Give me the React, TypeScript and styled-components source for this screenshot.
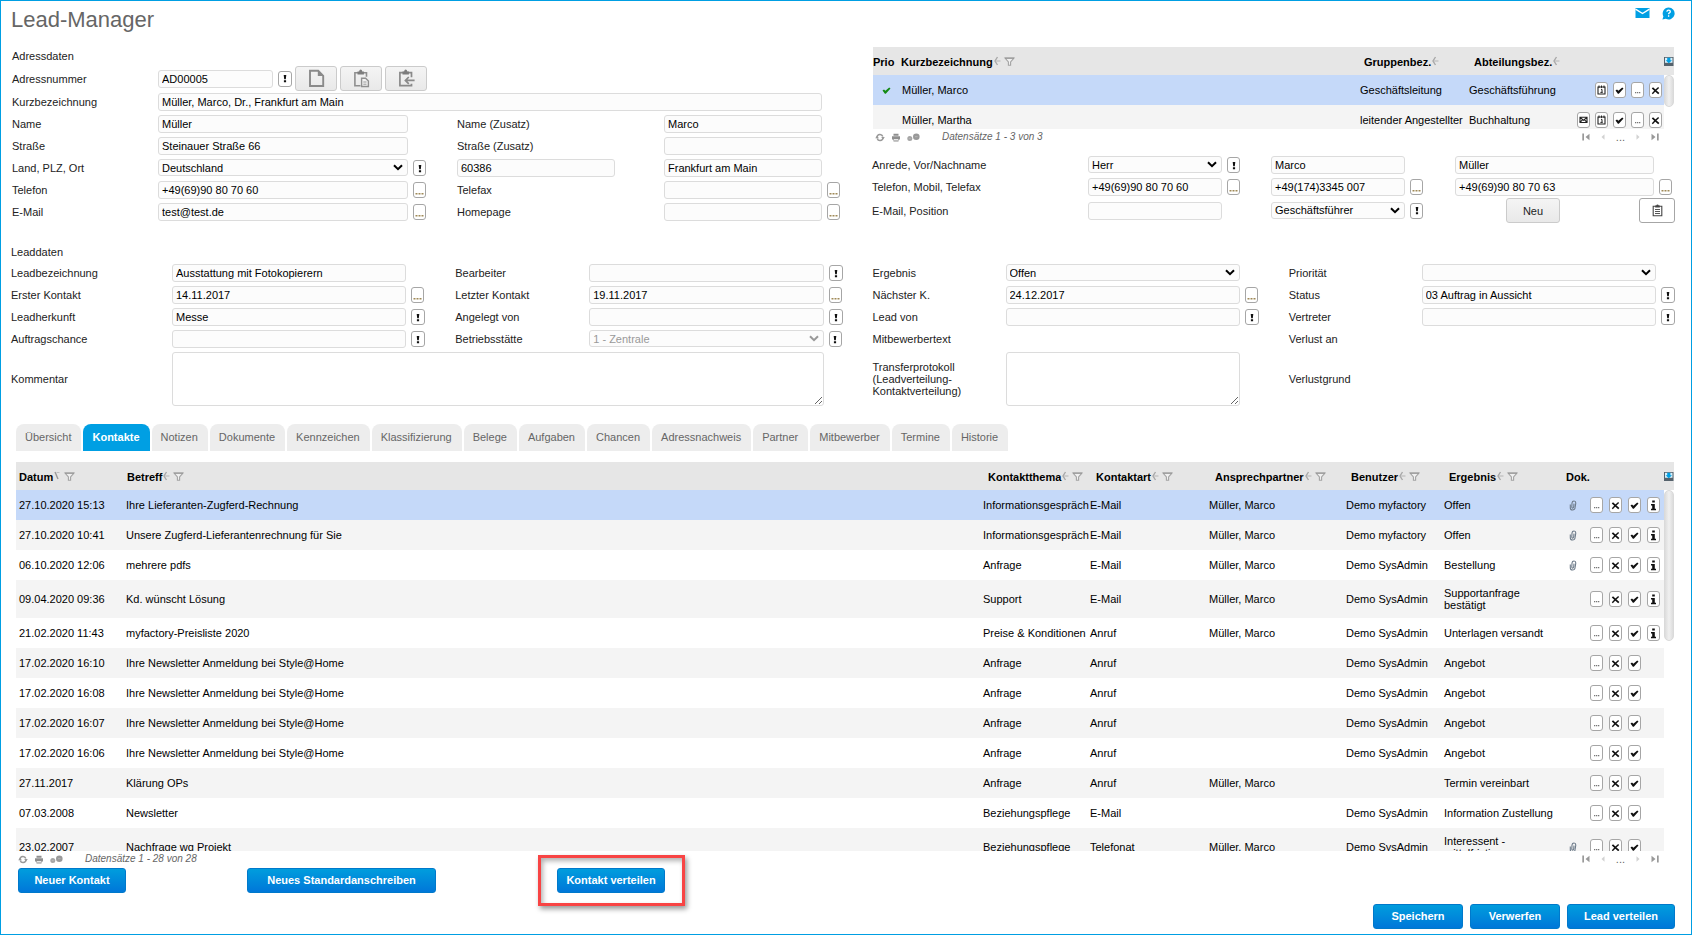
import React, { useId, useState } from 'react';
import styled, { createGlobalStyle, css } from 'styled-components';

const GlobalStyle = createGlobalStyle`
  *, *::before, *::after { box-sizing: border-box; }
  body {
    margin: 0;
    background: #fff;
    color: #222;
    font-family: "Liberation Sans", Arial, sans-serif;
    font-size: 11px;
    line-height: 12px;
  }
  button, input, select, textarea { font: inherit; margin: 0; }
`;

/* ---------- page frame ---------- */

const Page = styled.main`
  min-height: 100vh;
  border: 1px solid #009fe3;
  padding: 0 16px 5px 10px;
  display: flex;
  flex-direction: column;
`;

const PageHeader = styled.header`
  height: 45px;
  display: flex;
  justify-content: space-between;
  align-items: flex-start;
`;

const Title = styled.h1`
  margin: 7px 0 0;
  font-size: 22px;
  line-height: 24px;
  font-weight: 400;
  color: #666;
`;

const HeaderLinks = styled.nav`
  display: flex;
  gap: 12px;
  padding-top: 5px;
  a { display: block; height: 14px; }
  svg { display: block; }
`;

const TopColumns = styled.div`
  display: grid;
  grid-template-columns: 861fr 803fr;
`;

/* ---------- form parts ---------- */

const AddressGrid = styled.section`
  display: grid;
  grid-template-columns: 146px 250fr 49px 207fr 158fr 50px;
  grid-template-rows: 20px 25px repeat(6, 22px);
  align-items: center;
  padding-left: 1px;
  align-content: start;
`;

const PersonGrid = styled.section`
  display: grid;
  grid-template-columns: 216px 134fr 49px 134fr 50px 199fr 21px;
  grid-template-rows: 22px 22px 25px;
  align-items: center;
`;

const LeadGrid = styled.section`
  margin-top: 19px;
  display: grid;
  grid-template-columns:
    161px minmax(0, 1fr) 49px 134px minmax(0, 1fr) 49px
    133px minmax(0, 1fr) 49px 133px minmax(0, 1fr) 19px;
  grid-template-rows: 20px repeat(4, 22px) 58px;
  align-items: center;
`;

const SectionTitle = styled.h2`
  grid-column: 1 / -1;
  margin: 0;
  font-size: 11px;
  font-weight: 400;
`;

const Label = styled.label`
  white-space: pre-line;
`;

const PlainText = styled.span``;

const fieldLook = css`
  width: 100%;
  min-width: 0;
  border: 1px solid #dcdcdc;
  border-radius: 3px;
  background: #fcfcfc;
  color: #000;
  outline: none;
`;

const Input = styled.input<{ $span?: number }>`
  ${fieldLook}
  height: 18px;
  padding: 0 3px;
  ${(p) => p.$span && `grid-column: span ${p.$span};`}
`;

const SelectBox = styled.span`
  position: relative;
  display: block;
  height: 17px;
  margin-bottom: 1px;
  svg {
    position: absolute;
    right: 5px;
    top: 5px;
    pointer-events: none;
  }
`;

const NativeSelect = styled.select`
  ${fieldLook}
  display: block;
  height: 17px;
  padding: 0 16px 0 3px;
  appearance: none;
  &:disabled { color: #999; opacity: 1; }
`;

const TextArea = styled.textarea<{ $span?: number }>`
  ${fieldLook}
  display: block;
  height: 54px;
  background: #fff;
  ${(p) => p.$span && `grid-column: span ${p.$span};`}
`;

const Aside = styled.span<{ $span?: number }>`
  display: flex;
  align-items: center;
  padding-left: 5px;
  ${(p) => p.$span && `grid-column: span ${p.$span};`}
`;

const NumberRow = styled.span`
  grid-column: 2 / -1;
  display: flex;
  align-items: center;
  gap: 3px;
`;

const NumberInput = styled(Input)`
  width: 115px;
  margin-right: 2px;
`;

const ZipCell = styled.span`
  padding-right: 49px;
  display: flex;
`;

const MiniButton = styled.button<{ $wide?: boolean }>`
  flex: none;
  width: ${(p) => (p.$wide ? 14 : 13)}px;
  height: 16px;
  padding: 0;
  border: 1px solid #a6a6a6;
  border-radius: 3px;
  background: #fff;
  display: inline-flex;
  align-items: center;
  justify-content: center;
  color: #111;
  svg { display: block; }
`;

const ToolButton = styled.button<{ $width: number; $plain?: boolean }>`
  width: ${(p) => p.$width}px;
  height: 25px;
  padding: 0;
  border: 1px solid ${(p) => (p.$plain ? '#a6a6a6' : '#cbcbcb')};
  border-radius: 3px;
  background: ${(p) => (p.$plain ? '#fff' : 'linear-gradient(#f4f4f4, #e9e9e9)')};
  color: #222;
  display: inline-flex;
  align-items: center;
  justify-content: center;
`;

const PersonActions = styled.span`
  grid-column: span 2;
  display: flex;
  justify-content: space-between;
  padding-left: 51px;
`;

/* ---------- tabs ---------- */

const TabBar = styled.div`
  margin: 16px 0 11px 5px;
  display: flex;
  gap: 2px;
`;

const Tab = styled.button<{ $active: boolean }>`
  height: 27px;
  padding: 0 10px 2px 9px;
  border: 0;
  border-radius: 8px 8px 0 0;
  background: ${(p) => (p.$active ? '#009fe3' : '#ededed')};
  color: ${(p) => (p.$active ? '#fff' : '#666')};
  font-weight: ${(p) => (p.$active ? 700 : 400)};
`;

/* ---------- lists ---------- */

const ListFrame = styled.div<{ $height: number }>`
  position: relative;
  height: ${(p) => p.$height}px;
`;

const ListScroll = styled.div`
  height: 100%;
  overflow: hidden auto;
  scrollbar-width: none;
`;

const ScrollThumb = styled.span<{ $height: number }>`
  position: absolute;
  top: 28px;
  right: 0;
  width: 10px;
  height: ${(p) => p.$height}px;
  border: 1px solid #dadada;
  border-radius: 5px;
  background: linear-gradient(90deg, #dcdcdc, #f0f0f0 50%, #dcdcdc);
`;

const Table = styled.table`
  width: 100%;
  table-layout: fixed;
  border-collapse: collapse;
  color: #000;
`;

const HeadCell = styled.th<{ $indent?: number }>`
  height: 28px;
  padding: 1px 0 0 ${(p) => p.$indent ?? 0}px;
  background: #e6e6e6;
  text-align: left;
  white-space: nowrap;
`;

const HeadInner = styled.span`
  display: flex;
  align-items: center;
  svg { flex: none; }
`;

const PickerCell = styled(HeadCell)`
  padding: 0;
  svg { display: block; }
`;

const Row = styled.tr<{ $selected?: boolean }>`
  height: 30px;
  td { background: ${(p) => (p.$selected ? '#c5d9f9' : '#fff')}; }
  &:nth-child(even) td { background: #f4f4f4; }
  td:last-child { background: #fff; }
`;

const Cell = styled.td<{ $wrap?: boolean }>`
  padding: 7px ${(p) => (p.$wrap ? 7 : 0)}px 7px 3px;
  white-space: ${(p) => (p.$wrap ? 'normal' : 'nowrap')};
`;

const IconCell = styled.td`
  padding: 0;
  text-align: center;
  svg { display: block; margin: 0 auto; }
`;

const ActionCell = styled.td`
  padding: 0;
`;

const Actions = styled.span<{ $gap: number; $end?: boolean }>`
  display: flex;
  gap: ${(p) => p.$gap}px;
  justify-content: ${(p) => (p.$end ? 'flex-end' : 'flex-start')};
  padding: 0 2px 0 7px;
`;

const ListFooter = styled.div<{ $height: number }>`
  height: ${(p) => p.$height}px;
  padding: 0 15px 0 2px;
  display: flex;
  justify-content: space-between;
  align-items: flex-start;
  color: #666;
`;

const FooterGroup = styled.span`
  display: flex;
  align-items: center;
  gap: 6px;
  height: 16px;
`;

const RecordCount = styled.em`
  margin-left: 16px;
  font-size: 10px;
`;

const Pager = styled(FooterGroup)`
  gap: 11px;
`;

const PagerButton = styled.button`
  padding: 0;
  border: 0;
  background: none;
  display: block;
  svg { display: block; }
`;

const PersonList = styled.div`
  margin: 1px 1px 0;
`;

const ContactList = styled.div`
  margin: 0 1px 0 5px;
`;

/* ---------- action buttons ---------- */

const ActionBar = styled.div`
  padding-left: 7px;
  display: flex;
`;

const ActionSlot = styled.span<{ $after?: number }>`
  position: relative;
  margin-right: ${(p) => p.$after ?? 0}px;
`;

const PrimaryButton = styled.button<{ $width: number }>`
  width: ${(p) => p.$width}px;
  height: 25px;
  padding: 0 0 2px;
  border: 1px solid #0079cb;
  border-radius: 3px;
  background: linear-gradient(#009ddd, #0077d9);
  color: #fff;
  font-weight: 700;
`;

const Highlight = styled.span`
  position: absolute;
  inset: -13px -20px -13px -19px;
  border: 3px solid #f84444;
  box-shadow: 2px 3px 5px rgba(0, 0, 0, 0.4), inset 2px 3px 5px rgba(0, 0, 0, 0.3);
  pointer-events: none;
`;

const BottomBar = styled.footer`
  margin-top: 11px;
  display: flex;
  justify-content: flex-end;
  gap: 7px;
`;

/* ---------- icons ---------- */

const Chevron = ({ color = '#000' }: { color?: string }) => (
  <svg width="10" height="7" viewBox="0 0 10 7" aria-hidden="true">
    <path d="M1 1.2 L5 5.2 L9 1.2" fill="none" stroke={color} strokeWidth="2" />
  </svg>
);

const Bang = () => (
  <svg width="4" height="9" viewBox="0 0 4 9" aria-hidden="true">
    <path d="M0.7 1h2.6l-0.5 4.2h-1.6z M0.9 6.2h2.2v2h-2.2z" fill="#111" />
  </svg>
);

const Dots = () => (
  <svg width="9" height="12" viewBox="0 0 9 12" aria-hidden="true">
    <path d="M0.5 9h2v1.5h-2z M3.5 9h2v1.5h-2z M6.5 9h2v1.5h-2z" fill="#a08a58" />
  </svg>
);

const SmallDots = () => (
  <svg width="7" height="10" viewBox="0 0 7 10" aria-hidden="true">
    <path d="M1 7h1.3v1.2h-1.3z M3 7h1.3v1.2h-1.3z M5 7h1.3v1.2h-1.3z" fill="#777" />
  </svg>
);

const Cross = () => (
  <svg width="9" height="9" viewBox="0 0 9 9" aria-hidden="true">
    <path d="M1.4 1.8 L4.4 4.6 L7.8 7.6" stroke="#111" strokeWidth="1.8" fill="none" />
    <path d="M7.6 1.4 L4.4 4.6 L1.3 7.8" stroke="#111" strokeWidth="1.4" fill="none" />
  </svg>
);

const Check = ({ color = '#111' }: { color?: string }) => (
  <svg width="9" height="9" viewBox="0 0 9 9" aria-hidden="true">
    <path d="M0.5 4.4 L2 3.4 L3.4 4.7 L7.2 1.4 L8.5 2.4 L3.8 7.8 L2.9 7.8 Z" fill={color} />
  </svg>
);

const Info = () => (
  <svg width="7" height="11" viewBox="0 0 7 11" aria-hidden="true">
    <path d="M2.2 0.5h2.6v2h-2.6z M1 4h3.8v4.7h1.2v1.5h-5v-1.5h1.2v-3.2h-1.2z" fill="#111" />
  </svg>
);

const Calendar = () => (
  <svg width="9" height="10" viewBox="0 0 9 10" aria-hidden="true">
    <path d="M1 2h7v7h-7z" fill="none" stroke="#222" strokeWidth="1.1" />
    <path d="M2 0.5v2.4 M4.5 0.5v2.4 M7 0.5v2.4" stroke="#222" strokeWidth="1" />
    <path d="M4 4.4h1v3 M3.4 7.4h2.3" stroke="#222" strokeWidth="1" fill="none" />
  </svg>
);

const Envelope = () => (
  <svg width="9" height="8" viewBox="0 0 9 8" aria-hidden="true">
    <path d="M1 1.2h7v5.3h-7z M1 1.4l3.5 2.8l3.5-2.8 M1 6.4l2.4-2.6 M8 6.4l-2.4-2.6" fill="none" stroke="#222" strokeWidth="1.1" />
  </svg>
);

const Paperclip = () => (
  <svg width="8" height="11" viewBox="0 0 8 11" aria-hidden="true">
    <path d="M1.3 4.5 L1.3 8 Q1.3 10 3.5 10 Q5.8 10 6 8 L6.8 3 Q6.8 1 5 1 Q3.2 1 3 3 L2.8 7 Q2.9 8.2 3.8 8.1 Q4.6 8 4.7 7 L5 3.6" fill="none" stroke="#6c7a89" strokeWidth="1.1" />
  </svg>
);

const SortIcon = () => (
  <svg width="8" height="11" viewBox="0 0 8 11" aria-hidden="true">
    <path d="M4.5 1 L2 5 L4.5 9" fill="none" stroke="#a8a8a8" strokeWidth="1.4" />
    <path d="M3 5h4.5" stroke="#c0c0c0" strokeWidth="1.3" />
  </svg>
);

const SortDownIcon = () => (
  <svg width="8" height="11" viewBox="0 0 8 11" aria-hidden="true">
    <path d="M2 1 L5 8" stroke="#999" strokeWidth="1.4" />
    <path d="M3.5 1.5h3" stroke="#c0c0c0" strokeWidth="1" />
  </svg>
);

const FilterIcon = () => (
  <svg width="14" height="10" viewBox="0 0 14 10" aria-hidden="true">
    <path d="M4 1h9L9.6 5v3.2H7.4V5z" fill="#f0f0f0" stroke="#a3a3a3" strokeWidth="1.1" />
    <path d="M4 1.2h9" stroke="#999" strokeWidth="1.2" />
  </svg>
);

const PickerIcon = () => (
  <svg width="10" height="11" viewBox="0 0 10 11" aria-hidden="true">
    <path d="M0 1h9.5v9h-9.5z" fill="#55626c" />
    <path d="M1 1.8h7.5v5h-7.5z" fill="#d9f0fb" />
    <path d="M3.2 1.8h3.2v2.4h1.6l-3.2 3l-3.2-3h1.6z" fill="#009fe3" />
  </svg>
);

const ReloadIcon = () => (
  <svg width="10" height="9" viewBox="0 0 10 9" aria-hidden="true">
    <path d="M2 4.2A3 3 0 0 1 7.8 3.6 M8 5A3 3 0 0 1 2.2 5.6" fill="none" stroke="#999" strokeWidth="1.5" />
    <path d="M0.2 5.2h3.8l-2-2.4z M6.2 4h3.6l-1.8 2.4z" fill="#999" />
  </svg>
);

const PrintIcon = () => (
  <svg width="10" height="9" viewBox="0 0 10 9" aria-hidden="true">
    <path d="M2.5 0.8h5v2h-5z M1 3.2h8v3.3h-8z M2.5 6.5h5v2h-5z" fill="#8e8e8e" />
    <path d="M3 6h4v1.5h-4z" fill="#e8e8e8" />
  </svg>
);

const CountIcon = () => (
  <svg width="13" height="9" viewBox="0 0 13 9" aria-hidden="true">
    <circle cx="2.8" cy="5.6" r="2.5" fill="#a5a5a5" />
    <circle cx="9.3" cy="3.7" r="3.3" fill="#999" />
    <path d="M1.8 5.6h2 M8 3.7h2.6" stroke="#bbb" strokeWidth="0.8" />
  </svg>
);

const EdgeIcon = ({ end }: { end?: boolean }) => (
  <svg width="8" height="8" viewBox="0 0 8 8" aria-hidden="true">
    {end ? (
      <path d="M0.5 0.8l4 3.2l-4 3.2z M6 0.5h1.7v7h-1.7z" fill="#999" />
    ) : (
      <path d="M7.5 0.8l-4 3.2l4 3.2z M0.3 0.5h1.7v7h-1.7z" fill="#999" />
    )}
  </svg>
);

const StepIcon = ({ next }: { next?: boolean }) => (
  <svg width="4" height="8" viewBox="0 0 4 8" aria-hidden="true">
    {next ? <path d="M0.5 1.2l3 2.8l-3 2.8z" fill="#d2d2d2" /> : <path d="M3.5 1.2l-3 2.8l3 2.8z" fill="#d2d2d2" />}
  </svg>
);

const MailIcon = () => (
  <svg width="15" height="14" viewBox="0 0 15 14" aria-hidden="true">
    <path d="M0.5 2h14v10h-14z" fill="#009fe3" />
    <path d="M0.5 3.2l7 4.3l7-4.3" fill="none" stroke="#fff" strokeWidth="1.4" />
  </svg>
);

const HelpIcon = () => (
  <svg width="13" height="14" viewBox="0 0 13 14" aria-hidden="true">
    <path d="M6.6 1.5a6 6 0 1 1 -2.8 11.3l-3.4 0.8l1-3.2A6 6 0 0 1 6.6 1.5z" fill="#009fe3" />
    <path d="M4.9 5.7q0.1-1.6 1.7-1.6q1.7 0 1.7 1.4q0 0.9-0.9 1.4q-0.8 0.4-0.8 1.4 M6.6 9.3v1.4" fill="none" stroke="#fff" strokeWidth="1.3" />
  </svg>
);

const PageIcon = () => (
  <svg width="17" height="19" viewBox="0 0 17 19" aria-hidden="true">
    <path d="M2 1.8h8.2l5 5v10.2h-13.2z" fill="none" stroke="#8a8a8a" strokeWidth="1.9" />
    <path d="M9.8 1.5v5.5h5.6z" fill="#8a8a8a" />
  </svg>
);

const PasteIcon = () => (
  <svg width="17" height="19" viewBox="0 0 17 19" aria-hidden="true">
    <path d="M7.5 16.7h-5.6v-13h11.6v4" fill="none" stroke="#8f8f8f" strokeWidth="1.6" />
    <path d="M4.5 2.6h1.6q0.3-2 1.6-2t1.6 2h1.6v3h-6.4z" fill="#7d7d7d" />
    <path d="M8.6 9.3h4l2.8 2.8v5.4h-6.8z" fill="#f2f2f2" stroke="#8f8f8f" strokeWidth="1.4" />
    <path d="M10.3 13h3.2 M10.3 15.2h3.2" stroke="#999" strokeWidth="1" />
  </svg>
);

const TakeOverIcon = () => (
  <svg width="17" height="19" viewBox="0 0 17 19" aria-hidden="true">
    <path d="M13.5 8.2v-4.5h-11.6v13h11.6v-2" fill="none" stroke="#8a8a8a" strokeWidth="1.7" />
    <path d="M4.5 2.6h1.6q0.3-2 1.6-2t1.6 2h1.6v3h-6.4z" fill="#7d7d7d" />
    <path d="M16.6 11.4h-8.6 M10.8 8l-3.4 3.4l3.4 3.4" fill="none" stroke="#8a8a8a" strokeWidth="1.7" />
  </svg>
);

const NoteIcon = () => (
  <svg width="11" height="13" viewBox="0 0 11 13" aria-hidden="true">
    <path d="M1.2 2.2h8.6v9.6h-8.6z" fill="none" stroke="#444" strokeWidth="1.1" />
    <path d="M3.2 1.4h1.1q0.2-1 1.2-1t1.2 1h1.1v2h-4.6z" fill="#444" />
    <path d="M3 5.5h5 M3 7.5h5 M3 9.5h5" stroke="#555" strokeWidth="1" />
  </svg>
);

/* ---------- building blocks ---------- */

type Extra = 'bang' | 'dots';

function ExtraButton({ kind, name, wide }: { kind: Extra; name: string; wide?: boolean }) {
  return (
    <MiniButton type="button" $wide={wide} aria-label={`${name}: Auswahl`}>
      {kind === 'bang' ? <Bang /> : <Dots />}
    </MiniButton>
  );
}

function Select({ id, name, value, disabled }: { id?: string; name: string; value: string; disabled?: boolean }) {
  return (
    <SelectBox>
      <NativeSelect id={id} aria-label={id ? undefined : name} disabled={disabled} defaultValue={value}>
        <option value={value}>{value}</option>
      </NativeSelect>
      <Chevron color={disabled ? '#999' : '#000'} />
    </SelectBox>
  );
}

interface FieldProps {
  label: string;
  value?: string;
  kind?: 'input' | 'select' | 'disabled' | 'area' | 'none';
  extra?: Extra;
  span?: number;
}

/** One form entry: label, control and the narrow slot for its picker button. */
function Field({ label, value = '', kind = 'input', extra, span }: FieldProps) {
  const id = useId();
  return (
    <>
      {kind === 'none' ? <PlainText>{label}</PlainText> : <Label htmlFor={id}>{label}</Label>}
      {kind === 'input' && <Input id={id} defaultValue={value} $span={span} />}
      {kind === 'select' && <Select id={id} name={label} value={value} />}
      {kind === 'disabled' && <Select id={id} name={label} value={value} disabled />}
      {kind === 'area' && <TextArea id={id} $span={span} />}
      {kind === 'none' && <span />}
      <Aside>{extra && <ExtraButton kind={extra} name={label} wide={extra === 'bang' && kind === 'input'} />}</Aside>
    </>
  );
}

interface Column {
  title: string;
  width?: number;
  indent?: number;
  sort?: 'none' | 'both' | 'down';
  filter?: boolean;
}

function ListHead({ columns }: { columns: Column[] }) {
  return (
    <>
      <colgroup>
        {columns.map((c, i) => (
          <col key={i} style={c.width ? { width: c.width } : undefined} />
        ))}
        <col style={{ width: 10 }} />
      </colgroup>
      <thead>
        <tr>
          {columns.map((c, i) => (
            <HeadCell key={i} $indent={c.indent}>
              <HeadInner>
                {c.title}
                {c.sort === 'both' && <SortIcon />}
                {c.sort === 'down' && <SortDownIcon />}
                {c.filter && <FilterIcon />}
              </HeadInner>
            </HeadCell>
          ))}
          <PickerCell><PickerIcon /></PickerCell>
        </tr>
      </thead>
    </>
  );
}

function Footer({ text, height }: { text: string; height: number }) {
  return (
    <ListFooter $height={height}>
      <FooterGroup>
        <PagerButton type="button" aria-label="Aktualisieren"><ReloadIcon /></PagerButton>
        <PagerButton type="button" aria-label="Drucken"><PrintIcon /></PagerButton>
        <PagerButton type="button" aria-label="Anzahl"><CountIcon /></PagerButton>
        <RecordCount>{text}</RecordCount>
      </FooterGroup>
      <Pager>
        <PagerButton type="button" aria-label="Erste Seite"><EdgeIcon /></PagerButton>
        <PagerButton type="button" aria-label="Zurück"><StepIcon /></PagerButton>
        <span>...</span>
        <PagerButton type="button" aria-label="Weiter"><StepIcon next /></PagerButton>
        <PagerButton type="button" aria-label="Letzte Seite"><EdgeIcon end /></PagerButton>
      </Pager>
    </ListFooter>
  );
}

/* ---------- data ---------- */

const personColumns: Column[] = [
  { title: 'Prio', width: 26 },
  { title: 'Kurzbezeichnung', indent: 2, sort: 'both', filter: true },
  { title: 'Gruppenbez.', width: 109, indent: 7, sort: 'both' },
  { title: 'Abteilungsbez.', width: 104, indent: 8, sort: 'both' },
  { title: '', width: 94 },
];

const persons = [
  { name: 'Müller, Marco', group: 'Geschäftsleitung', dept: 'Geschäftsführung', main: true },
  { name: 'Müller, Martha', group: 'leitender Angestellter', dept: 'Buchhaltung', main: false },
];

const contactColumns: Column[] = [
  { title: 'Datum', width: 107, indent: 3, sort: 'down', filter: true },
  { title: 'Betreff', indent: 4, sort: 'both', filter: true },
  { title: 'Kontaktthema', width: 107, indent: 8, sort: 'both', filter: true },
  { title: 'Kontaktart', width: 119, indent: 9, sort: 'both', filter: true },
  { title: 'Ansprechpartner', width: 137, indent: 9, sort: 'both', filter: true },
  { title: 'Benutzer', width: 98, indent: 8, sort: 'both', filter: true },
  { title: 'Ergebnis', width: 122, indent: 8, sort: 'both', filter: true },
  { title: 'Dok.', width: 20, indent: 3 },
  { title: '', width: 81 },
];

interface Contact {
  date: string;
  subject: string;
  topic: string;
  type: string;
  partner: string;
  user: string;
  result: string;
  doc?: boolean;
  info?: boolean;
}

const mm = 'Müller, Marco';
const sys = 'Demo SysAdmin';
const newsletter = 'Ihre Newsletter Anmeldung bei Style@Home';

const contacts: Contact[] = [
  { date: '27.10.2020 15:13', subject: 'Ihre Lieferanten-Zugferd-Rechnung', topic: 'Informationsgespräch', type: 'E-Mail', partner: mm, user: 'Demo myfactory', result: 'Offen', doc: true, info: true },
  { date: '27.10.2020 10:41', subject: 'Unsere Zugferd-Lieferantenrechnung für Sie', topic: 'Informationsgespräch', type: 'E-Mail', partner: mm, user: 'Demo myfactory', result: 'Offen', doc: true, info: true },
  { date: '06.10.2020 12:06', subject: 'mehrere pdfs', topic: 'Anfrage', type: 'E-Mail', partner: mm, user: sys, result: 'Bestellung', doc: true, info: true },
  { date: '09.04.2020 09:36', subject: 'Kd. wünscht Lösung', topic: 'Support', type: 'E-Mail', partner: mm, user: sys, result: 'Supportanfrage bestätigt', info: true },
  { date: '21.02.2020 11:43', subject: 'myfactory-Preisliste 2020', topic: 'Preise & Konditionen', type: 'Anruf', partner: mm, user: sys, result: 'Unterlagen versandt', info: true },
  { date: '17.02.2020 16:10', subject: newsletter, topic: 'Anfrage', type: 'Anruf', partner: '', user: sys, result: 'Angebot' },
  { date: '17.02.2020 16:08', subject: newsletter, topic: 'Anfrage', type: 'Anruf', partner: '', user: sys, result: 'Angebot' },
  { date: '17.02.2020 16:07', subject: newsletter, topic: 'Anfrage', type: 'Anruf', partner: '', user: sys, result: 'Angebot' },
  { date: '17.02.2020 16:06', subject: newsletter, topic: 'Anfrage', type: 'Anruf', partner: '', user: sys, result: 'Angebot' },
  { date: '27.11.2017', subject: 'Klärung OPs', topic: 'Anfrage', type: 'Anruf', partner: mm, user: '', result: 'Termin vereinbart' },
  { date: '07.03.2008', subject: 'Newsletter', topic: 'Beziehungspflege', type: 'E-Mail', partner: '', user: sys, result: 'Information Zustellung' },
  { date: '23.02.2007', subject: 'Nachfrage wg Projekt', topic: 'Beziehungspflege', type: 'Telefonat', partner: mm, user: sys, result: 'Interessent - mittelfristig', doc: true },
];

const tabs = [
  'Übersicht', 'Kontakte', 'Notizen', 'Dokumente', 'Kennzeichen', 'Klassifizierung', 'Belege',
  'Aufgaben', 'Chancen', 'Adressnachweis', 'Partner', 'Mitbewerber', 'Termine', 'Historie',
];

/* ---------- sections ---------- */

function AddressSection() {
  return (
    <AddressGrid>
      <SectionTitle>Adressdaten</SectionTitle>

      <Label htmlFor="adressnummer">Adressnummer</Label>
      <NumberRow>
        <NumberInput id="adressnummer" defaultValue="AD00005" />
        <ExtraButton kind="bang" name="Adressnummer" wide />
        <ToolButton type="button" $width={42} aria-label="Neue Adresse"><PageIcon /></ToolButton>
        <ToolButton type="button" $width={42} aria-label="Einfügen"><PasteIcon /></ToolButton>
        <ToolButton type="button" $width={42} aria-label="Übernehmen"><TakeOverIcon /></ToolButton>
      </NumberRow>

      <Field label="Kurzbezeichnung" value="Müller, Marco, Dr., Frankfurt am Main" span={4} />

      <Field label="Name" value="Müller" />
      <Field label="Name (Zusatz)" value="Marco" />

      <Field label="Straße" value="Steinauer Straße 66" />
      <Field label="Straße (Zusatz)" />

      <Field label="Land, PLZ, Ort" value="Deutschland" kind="select" extra="bang" />
      <ZipCell><Input aria-label="PLZ" defaultValue="60386" /></ZipCell>
      <Input aria-label="Ort" defaultValue="Frankfurt am Main" />
      <Aside />

      <Field label="Telefon" value="+49(69)90 80 70 60" extra="dots" />
      <Field label="Telefax" extra="dots" />

      <Field label="E-Mail" value="test@test.de" extra="dots" />
      <Field label="Homepage" extra="dots" />
    </AddressGrid>
  );
}

function PersonSection() {
  return (
    <div>
      <PersonList>
        <ListFrame $height={82}>
          <ListScroll>
            <Table>
              <ListHead columns={personColumns} />
              <tbody>
                {persons.map((p) => (
                  <Row key={p.name} $selected={p.main}>
                    <IconCell>{p.main && <Check color="#138a13" />}</IconCell>
                    <Cell>{p.name}</Cell>
                    <Cell>{p.group}</Cell>
                    <Cell>{p.dept}</Cell>
                    <ActionCell>
                      <Actions $gap={5} $end>
                        {!p.main && <MiniButton type="button" aria-label="E-Mail"><Envelope /></MiniButton>}
                        <MiniButton type="button" aria-label="Termin"><Calendar /></MiniButton>
                        <MiniButton type="button" aria-label="Auswählen"><Check /></MiniButton>
                        <MiniButton type="button" aria-label="Details"><SmallDots /></MiniButton>
                        <MiniButton type="button" aria-label="Löschen"><Cross /></MiniButton>
                      </Actions>
                    </ActionCell>
                    <td />
                  </Row>
                ))}
              </tbody>
            </Table>
          </ListScroll>
          <ScrollThumb $height={32} />
        </ListFrame>
        <Footer text="Datensätze 1 - 3 von 3" height={25} />
      </PersonList>

      <PersonGrid>
        <Field label="Anrede, Vor/Nachname" value="Herr" kind="select" extra="bang" />
        <Input aria-label="Vorname" defaultValue="Marco" />
        <Aside />
        <Input aria-label="Nachname" defaultValue="Müller" />
        <Aside />

        <Field label="Telefon, Mobil, Telefax" value="+49(69)90 80 70 60" extra="dots" />
        <Input aria-label="Mobil" defaultValue="+49(174)3345 007" />
        <Aside><ExtraButton kind="dots" name="Mobil" /></Aside>
        <Input aria-label="Telefax" defaultValue="+49(69)90 80 70 63" />
        <Aside><ExtraButton kind="dots" name="Telefax" /></Aside>

        <Field label="E-Mail, Position" />
        <Select name="Position" value="Geschäftsführer" />
        <Aside><ExtraButton kind="bang" name="Position" /></Aside>
        <PersonActions>
          <ToolButton type="button" $width={54}>Neu</ToolButton>
          <ToolButton type="button" $width={36} $plain aria-label="Notiz"><NoteIcon /></ToolButton>
        </PersonActions>
      </PersonGrid>
    </div>
  );
}

function LeadSection() {
  return (
    <LeadGrid>
      <SectionTitle>Leaddaten</SectionTitle>

      <Field label="Leadbezeichnung" value="Ausstattung mit Fotokopierern" />
      <Field label="Bearbeiter" extra="bang" />
      <Field label="Ergebnis" value="Offen" kind="select" />
      <Field label="Priorität" kind="select" />

      <Field label="Erster Kontakt" value="14.11.2017" extra="dots" />
      <Field label="Letzter Kontakt" value="19.11.2017" extra="dots" />
      <Field label="Nächster K." value="24.12.2017" extra="dots" />
      <Field label="Status" value="03 Auftrag in Aussicht" extra="bang" />

      <Field label="Leadherkunft" value="Messe" extra="bang" />
      <Field label="Angelegt von" extra="bang" />
      <Field label="Lead von" extra="bang" />
      <Field label="Vertreter" extra="bang" />

      <Field label="Auftragschance" extra="bang" />
      <Field label="Betriebsstätte" value="1 - Zentrale" kind="disabled" extra="bang" />
      <Field label="Mitbewerbertext" kind="none" />
      <Field label="Verlust an" kind="none" />

      <Field label="Kommentar" kind="area" span={4} />
      <Field label={'Transferprotokoll\n(Leadverteilung-\nKontaktverteilung)'} kind="area" />
      <Field label="Verlustgrund" kind="none" />
    </LeadGrid>
  );
}

function ContactSection() {
  return (
    <ContactList>
      <ListFrame $height={389}>
        <ListScroll>
          <Table>
            <ListHead columns={contactColumns} />
            <tbody>
              {contacts.map((c, i) => (
                <Row key={c.date} $selected={i === 0}>
                  <Cell>{c.date}</Cell>
                  <Cell>{c.subject}</Cell>
                  <Cell>{c.topic}</Cell>
                  <Cell>{c.type}</Cell>
                  <Cell>{c.partner}</Cell>
                  <Cell>{c.user}</Cell>
                  <Cell $wrap>{c.result}</Cell>
                  <IconCell>{c.doc && <Paperclip />}</IconCell>
                  <ActionCell>
                    <Actions $gap={6}>
                      <MiniButton type="button" aria-label="Details"><SmallDots /></MiniButton>
                      <MiniButton type="button" aria-label="Löschen"><Cross /></MiniButton>
                      <MiniButton type="button" aria-label="Erledigt"><Check /></MiniButton>
                      {c.info && <MiniButton type="button" aria-label="Info"><Info /></MiniButton>}
                    </Actions>
                  </ActionCell>
                  <td />
                </Row>
              ))}
            </tbody>
          </Table>
        </ListScroll>
        <ScrollThumb $height={151} />
      </ListFrame>
      <Footer text="Datensätze 1 - 28 von 28" height={17} />
    </ContactList>
  );
}

export default function App() {
  const [active, setActive] = useState('Kontakte');
  return (
    <>
      <GlobalStyle />
      <Page>
        <PageHeader>
          <Title>Lead-Manager</Title>
          <HeaderLinks>
            <a href="#mail" aria-label="Nachricht"><MailIcon /></a>
            <a href="#hilfe" aria-label="Hilfe"><HelpIcon /></a>
          </HeaderLinks>
        </PageHeader>

        <TopColumns>
          <AddressSection />
          <PersonSection />
        </TopColumns>

        <LeadSection />

        <TabBar role="tablist">
          {tabs.map((t) => (
            <Tab key={t} type="button" role="tab" aria-selected={t === active} $active={t === active} onClick={() => setActive(t)}>
              {t}
            </Tab>
          ))}
        </TabBar>

        <ContactSection />

        <ActionBar>
          <ActionSlot $after={121}><PrimaryButton type="button" $width={108}>Neuer Kontakt</PrimaryButton></ActionSlot>
          <ActionSlot $after={121}><PrimaryButton type="button" $width={189}>Neues Standardanschreiben</PrimaryButton></ActionSlot>
          <ActionSlot>
            <PrimaryButton type="button" $width={108}>Kontakt verteilen</PrimaryButton>
            <Highlight />
          </ActionSlot>
        </ActionBar>

        <BottomBar>
          <PrimaryButton type="button" $width={90}>Speichern</PrimaryButton>
          <PrimaryButton type="button" $width={90}>Verwerfen</PrimaryButton>
          <PrimaryButton type="button" $width={108}>Lead verteilen</PrimaryButton>
        </BottomBar>
      </Page>
    </>
  );
}
